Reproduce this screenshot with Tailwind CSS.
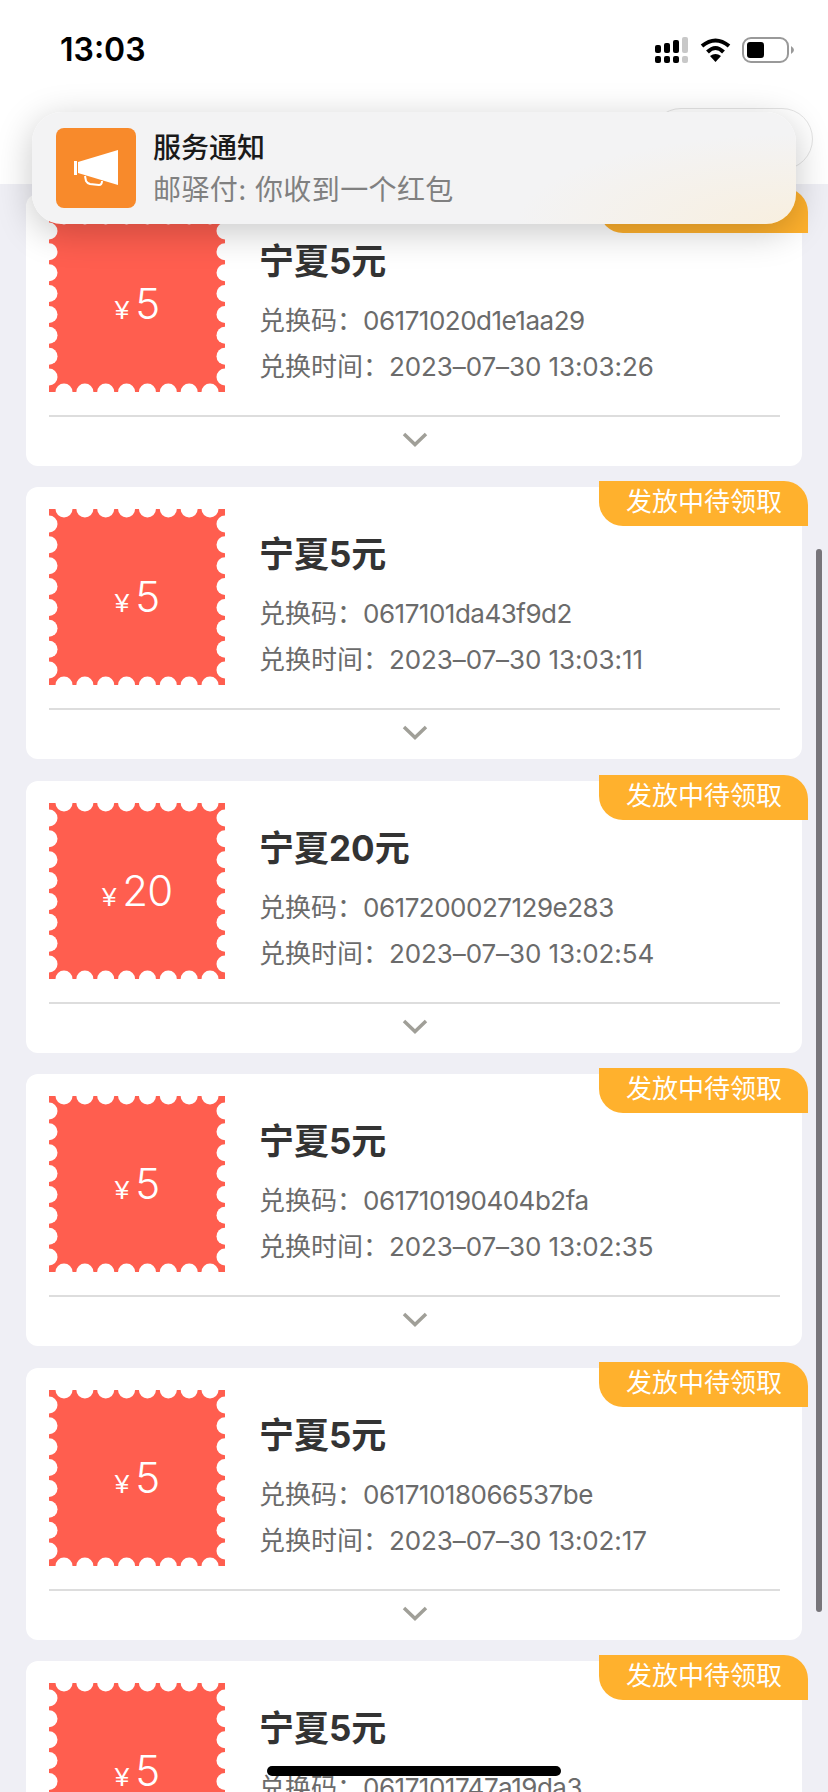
<!DOCTYPE html>
<html lang="zh">
<head>
    <meta charset="UTF-8">
    <meta name="viewport" content="width=device-width, initial-scale=1.0">
    <title>兑换记录</title>
    <script src="https://cdn.jsdelivr.net/npm/@tailwindcss/browser@4"></script>
</head>
<body class="bg-[#efeff5] font-['Liberation_Sans','Noto_Sans_CJK_SC',sans-serif]">
<div class="relative w-[828px] h-[1792px] overflow-hidden">

    <!-- Status bar + header -->
    <header class="relative bg-white h-[184px]">
        <div class="flex items-start justify-between pl-[60px] pr-[34px] pt-[29px]">
            <span class="font-['Inter',sans-serif] text-[32px] leading-[42px] font-semibold text-black">13:03</span>
            <svg class="mt-[8px]" width="140" height="26" viewBox="0 0 140 26">
                <g fill="#000">
                    <rect x="1" y="8" width="6" height="8" rx="2"/><rect x="10" y="6" width="6" height="10" rx="2"/><rect x="19" y="3" width="6" height="13" rx="2"/>
                    <rect x="1" y="19" width="6" height="7" rx="2"/><rect x="10" y="19" width="6" height="7" rx="2"/><rect x="19" y="19" width="6" height="7" rx="2"/>
                </g>
                <g fill="#c8c8c8"><rect x="28" y="0" width="6" height="16" rx="2"/><rect x="28" y="19" width="6" height="7" rx="2"/></g>
                <g fill="none" stroke="#000" stroke-width="4">
                    <path d="M48 9 Q61.500 -2 75 9"/><path d="M53.500 15 Q61.500 7 69.500 15"/>
                </g>
                <path d="M56 19 Q61.500 15 67 19 L61.500 25 Z" fill="#000"/>
                <rect x="89" y="1" width="45" height="24" rx="8" fill="#fff" stroke="#999" stroke-width="2"/>
                <rect x="93" y="5" width="17" height="16" rx="3" fill="#000"/>
                <path d="M137 9 Q140 11 140 13 Q140 15 137 17 Z" fill="#999"/>
            </svg>
        </div>
        <div class="absolute left-[650px] top-[108px] w-[163px] h-[62px] rounded-full border border-[#e4e4e4]"></div>
    </header>

    <!-- List -->
    <main id="list" class="px-[26px] pt-[9.5px] flex flex-col gap-[21.5px]"></main>

    <!-- Scrollbar -->
    <div class="absolute left-[816px] top-[549px] w-[6px] h-[1063px] rounded-full bg-[#77757a]"></div>

    <!-- Notification -->
    <div class="absolute left-[32px] top-[112px] w-[764px] h-[112px] rounded-[30px] bg-[radial-gradient(280px_90px_at_100%_100%,#f8efdf,#f3f3f4)] shadow-[0_8px_36px_rgba(0,0,0,0.22)] flex items-center pl-[24px]">
        <div class="w-[80px] h-[80px] rounded-[8px] bg-[#f88a2b] shrink-0">
            <svg width="80" height="80" viewBox="0 0 80 80">
                <path d="M22 34 L62 22 L62 57 L22 45 Z" fill="#fff"/>
                <rect x="18" y="33" width="3" height="14" fill="#fff"/>
                <path d="M29 48 L30 53 Q31 55 34 56 L43 57 Q46 57 46 53" fill="none" stroke="#fff" stroke-width="2"/>
            </svg>
        </div>
        <div class="ml-[17px] pt-[2px] font-['Inter','Noto_Sans_CJK_SC',sans-serif]">
            <p class="text-[28px] leading-[38px] font-medium text-[#1a1a1a]">服务通知</p>
            <p class="text-[28px] leading-[40px] mt-[3px] tracking-[0.4px] text-[#808080]">邮驿付: 你收到一个红包</p>
        </div>
    </div>

    <!-- Home indicator -->
    <div class="absolute left-[267px] top-[1766px] w-[294px] h-[10px] rounded-full bg-black"></div>
</div>

<script>
    const items = [
        { amount: '5', code: '06171020d1e1aa29', time: '2023–07–30 13:03:26' },
        { amount: '5', code: '0617101da43f9d2', time: '2023–07–30 13:03:11' },
        { amount: '20', code: '0617200027129e283', time: '2023–07–30 13:02:54' },
        { amount: '5', code: '061710190404b2fa', time: '2023–07–30 13:02:35' },
        { amount: '5', code: '06171018066537be', time: '2023–07–30 13:02:17' },
        { amount: '5', code: '0617101747a19da3', time: '' }
    ];

    // Perforated stamp edges: 8 white circles per side
    let holes = '';
    for (let i = 0; i < 8; i++) {
        const p = 15 + i * 20.86;
        holes += `<circle cx="${p}" cy="0" r="8.5"/><circle cx="${p}" cy="176" r="8.5"/>`;
        holes += `<circle cx="0" cy="${p}" r="8.5"/><circle cx="176" cy="${p}" r="8.5"/>`;
    }

    document.getElementById('list').innerHTML = items.map(item => `
        <article class="relative bg-white rounded-[12px] h-[272px] shrink-0 pl-[23px] pr-[22px] pt-[22px]">
            <span class="absolute -right-[6px] -top-[6px] w-[209px] h-[45px] bg-[#ffb12d] rounded-tr-[24px] rounded-bl-[24px] text-white text-[26px] leading-[43px] pl-[27px]">发放中待领取</span>
            <div class="flex h-[176px]">
                <div class="relative w-[176px] h-[176px] shrink-0 flex items-baseline justify-center">
                    <svg class="absolute inset-0" width="176" height="176" viewBox="0 0 176 176">
                        <rect width="176" height="176" fill="#ff5e4f"/>
                        <g fill="#fff">${holes}</g>
                    </svg>
                    <span class="relative text-white text-[26px] leading-[50px] mt-[69px] mr-[6px]">¥</span>
                    <span class="relative text-white text-[42px] leading-[50px] font-light tracking-[-1px] font-['Inter',sans-serif]">${item.amount}</span>
                </div>
                <div class="ml-[34px] pt-[25px] font-['Inter','Noto_Sans_CJK_SC',sans-serif]">
                    <h3 class="text-[35px] leading-[40px] font-bold text-[#333]">宁夏${item.amount}元</h3>
                    <p class="text-[26px] leading-[36px] mt-[20px] text-[#6b6b6b]">兑换码<span class="font-['Noto_Sans_CJK_TC']">：</span><span class="tracking-[-0.5px]">${item.code}</span></p>
                    <p class="text-[26px] leading-[36px] mt-[8px] text-[#6b6b6b] ${item.time ? '' : 'hidden'}">兑换时间<span class="font-['Noto_Sans_CJK_TC']">：</span><span class="tracking-[-0.1px]">${item.time}</span></p>
                </div>
            </div>
            <div class="h-[2px] bg-[#dddddd] mt-[23px]"></div>
            <svg class="mx-auto mt-[15px]" width="26" height="16" viewBox="0 0 26 16">
                <path d="M2 2 L13 12.500 L24 2" fill="none" stroke="#a09f98" stroke-width="3.500"/>
            </svg>
        </article>
    `).join('');
</script>
</body>
</html>
